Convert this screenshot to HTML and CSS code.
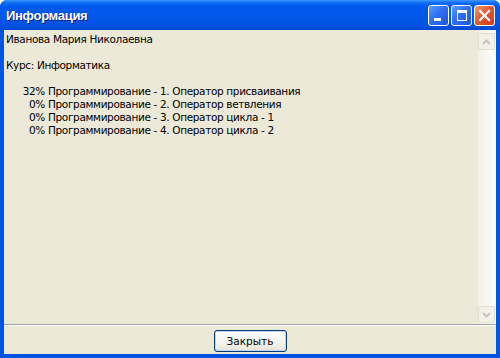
FILE: index.html
```html
<!DOCTYPE html>
<html lang="ru">
<head>
  <meta charset="UTF-8" />
  <title>Информация</title>
  <link rel="stylesheet" href="styles.css">
</head>
<body>
  <div class="window">
    <div class="titlebar">
      <span class="title">Информация</span>
      <div class="controls">
        <div class="ctl ctl-min"><span class="min-bar"></span></div>
        <div class="ctl ctl-max"><span class="max-box"></span></div>
        <div class="ctl ctl-close">
          <svg width="13" height="13" viewBox="0 0 13 13">
            <path d="M2 2 L11 11 M11 2 L2 11" stroke="#fff" stroke-width="2.2" stroke-linecap="square" />
          </svg>
        </div>
      </div>
    </div>

    <div class="frame">
      <div class="memo">
        <div class="memo-text">
          <div class="line">Иванова Мария Николаевна</div>
          <div class="line"></div>
          <div class="line">Курс: Информатика</div>
          <div class="line"></div>
          <div class="line"><span class="pct">32%</span> Программирование - 1. Оператор присваивания</div>
          <div class="line"><span class="pct">0%</span> Программирование - 2. Оператор ветвления</div>
          <div class="line"><span class="pct">0%</span> Программирование - 3. Оператор цикла - 1</div>
          <div class="line"><span class="pct">0%</span> Программирование - 4. Оператор цикла - 2</div>
        </div>
        <div class="scrollbar">
          <div class="sb-btn">
            <svg width="9" height="6" viewBox="0 0 9 6"><path d="M1 5 L4.5 1.5 L8 5" fill="none" stroke="#c8c6ba" stroke-width="2" /></svg>
          </div>
          <div class="sb-track"></div>
          <div class="sb-btn">
            <svg width="9" height="6" viewBox="0 0 9 6"><path d="M1 1 L4.5 4.5 L8 1" fill="none" stroke="#c8c6ba" stroke-width="2" /></svg>
          </div>
        </div>
      </div>
      <div class="footer">
        <button class="btn">Закрыть</button>
      </div>
    </div>
  </div>
</body>
</html>
```

FILE: styles.css
```css
html, body {
  margin: 0;
  padding: 0;
  background: #ffffff;
}

.window {
  width: 500px;
  height: 358px;
  display: flex;
  flex-direction: column;
  background: #0055e5;
  border-radius: 7px 7px 0 0;
  overflow: hidden;
  font-family: "DejaVu Sans", sans-serif;
}

.titlebar {
  height: 30px;
  flex: none;
  display: flex;
  align-items: center;
  justify-content: space-between;
  padding: 0 5px 0 6px;
  background: linear-gradient(to bottom, #3d95ff 0%, #0a6cf4 10%, #0058ee 22%, #0057e8 60%, #0052e0 85%, #0048cf 100%);
}

.title {
  color: #ffffff;
  font-family: "Liberation Sans", sans-serif;
  font-weight: bold;
  font-size: 13px;
  letter-spacing: -0.3px;
  text-shadow: 1px 1px 0 #0a1e7c;
  margin-top: 1px;
}

.controls {
  display: flex;
  gap: 2px;
  margin-top: 1px;
}

.ctl {
  width: 19px;
  height: 19px;
  border: 1px solid #ffffff;
  border-radius: 3px;
  display: flex;
  align-items: center;
  justify-content: center;
}

.ctl-min, .ctl-max {
  background: linear-gradient(135deg, #5a9cff 0%, #2f6ff2 45%, #1d58e0 100%);
}

.ctl-close {
  background: linear-gradient(135deg, #f29a7c 0%, #e45a30 45%, #c7401a 100%);
}

.min-bar {
  width: 7px;
  height: 3px;
  background: #ffffff;
  margin-top: 8px;
  margin-right: 3px;
}

.max-box {
  width: 8px;
  height: 7px;
  border: 1px solid #ffffff;
  border-top-width: 3px;
}

.frame {
  flex: 1;
  display: flex;
  flex-direction: column;
  margin: 0 4px 4px 4px;
  background: #ece9d8;
  min-height: 0;
}

.memo {
  flex: 1;
  display: flex;
  border-bottom: 1px solid #a0a0a0;
  min-height: 0;
}

.memo-text {
  flex: 1;
  padding: 3px 0 0 2px;
  font-family: "DejaVu Sans", sans-serif;
  font-size: 10.5px;
  color: #000000;
  letter-spacing: -0.35px;
}

.line {
  height: 13px;
  line-height: 13px;
  white-space: pre;
}

.pct {
  display: inline-block;
  width: 39px;
  text-align: right;
}

.scrollbar {
  width: 17px;
  display: flex;
  flex-direction: column;
  padding: 3px 1px 1px 0;
  background: linear-gradient(to right, #f2f0e8 0%, #f6f5f0 40%, #fdfdfb 100%);
}

.sb-btn {
  width: 15px;
  height: 15px;
  border: 1px solid #e2dfd2;
  border-radius: 2px;
  background: #f2f0e7;
  display: flex;
  align-items: center;
  justify-content: center;
  flex: none;
}

.sb-track {
  flex: 1;
}

.footer {
  height: 28px;
  flex: none;
  display: flex;
  justify-content: center;
  align-items: center;
  border-top: 1px solid #ffffff;
}

.btn {
  width: 73px;
  height: 22px;
  margin-top: 1px;
  font-family: "DejaVu Sans", sans-serif;
  font-size: 10.5px;
  color: #000000;
  background: linear-gradient(to bottom, #ffffff 0%, #f4f3ee 60%, #e6e3d6 100%);
  border: 1px solid #003c74;
  border-radius: 3px;
  box-shadow: inset 0 0 0 1px #c1d3fb;
  padding: 0;
}
```
